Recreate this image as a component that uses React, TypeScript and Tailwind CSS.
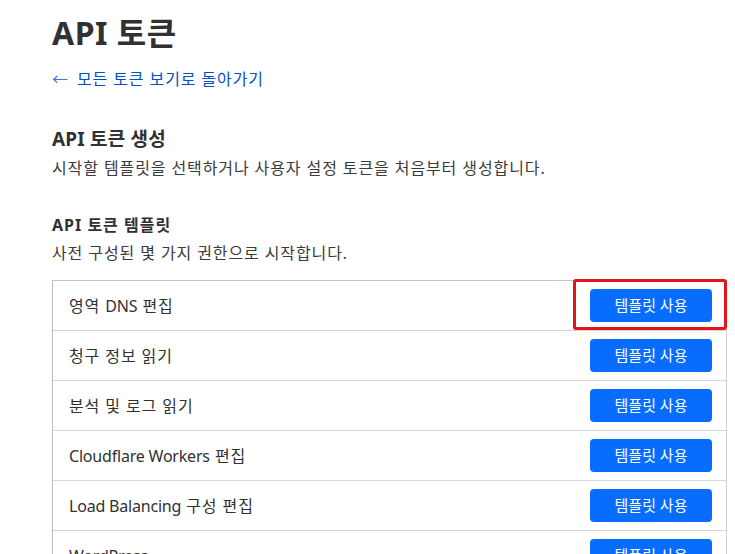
import type { ReactNode } from 'react';

const latin = (s: string) => <span className="tracking-[-0.2px]">{s}</span>;

const templates: { key: string; label: ReactNode }[] = [
  { key: 'dns', label: <>영역 {latin('DNS')} 편집</> },
  { key: 'billing', label: '청구 정보 읽기' },
  { key: 'analytics', label: '분석 및 로그 읽기' },
  { key: 'workers', label: <>{latin('Cloudflare Workers')} 편집</> },
  { key: 'lb', label: <>{latin('Load Balancing')} 구성 편집</> },
  { key: 'wp', label: latin('WordPress') },
];

export default function App() {
  return (
    <div
      className="h-[554px] overflow-hidden bg-white pl-[52px] pr-2 pt-[13px] tracking-[0.9px] text-[#313131]"
      style={{ fontFamily: '"Noto Sans", "Noto Sans CJK KR", sans-serif' }}
    >
      <h1 className="text-[32px] font-bold leading-[40px] tracking-[0.5px]">API 토큰</h1>

      <a href="#" className="mt-[14px] flex items-center gap-2 text-[16px] leading-6 text-[#0051c3]">
        <span className="text-[#3b7be0]">←</span>
        <span>모든 토큰 보기로 돌아가기</span>
      </a>

      <h2 className="mt-[34px] text-[19px] font-bold leading-7 tracking-[0.2px]">API 토큰 생성</h2>
      <p className="mt-[3px] text-[16px] leading-6 text-[#3a3a3a]">
        시작할 템플릿을 선택하거나 사용자 설정 토큰을 처음부터 생성합니다.
      </p>

      <h3 className="mt-[33px] text-[16px] font-bold leading-6 tracking-[1px]">API 토큰 템플릿</h3>
      <p className="mt-[4px] text-[16px] leading-6 text-[#3a3a3a]">사전 구성된 몇 가지 권한으로 시작합니다.</p>

      <div className="mt-[15px] w-[675px] border-t border-l border-r border-t-[#c4c4c4] border-l-[#bdbdbd] border-r-[#d0d0d0]">
        {templates.map((t, i) => (
          <div
            key={t.key}
            className="relative flex h-[50px] items-center justify-between border-b border-[#d6d6d6] pl-4 pr-[14px]"
          >
            <span className="text-[16px] text-[#313131]">{t.label}</span>
            <button className="h-[33px] w-[122px] rounded-[4px] bg-[#086dff] text-[15px] tracking-normal text-white">
              템플릿 사용
            </button>
            {i === 0 && (
              <div className="pointer-events-none absolute right-[-1px] top-[-2px] h-[51px] w-[154px] rounded-[3px] border-[3px] border-[#e3141c]" />
            )}
          </div>
        ))}
      </div>
    </div>
  );
}
